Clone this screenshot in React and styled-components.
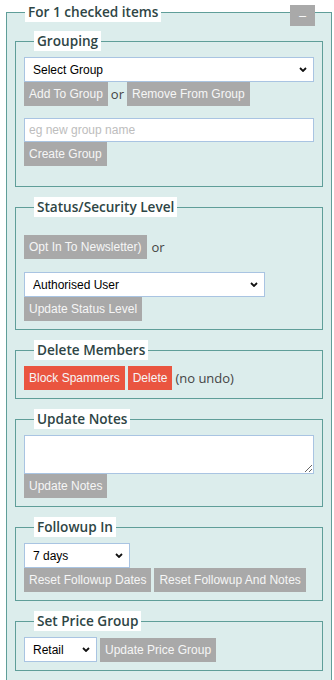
import React from 'react';
import styled, { createGlobalStyle, css } from 'styled-components';

const GlobalStyle = createGlobalStyle`
  body {
    margin: 0;
    background: #fff;
    font-family: "Liberation Sans", Arial, sans-serif;
  }
`;

const teal = '#5f9e99';
const fieldBorder = '#a9c4e2';

const Page = styled.div`
  padding: 2px 2px 0 6px;
`;

const Panel = styled.fieldset`
  position: relative;
  margin: 0;
  min-width: 0;
  padding: 9px 8px 8px;
  border: 1px solid ${teal};
  background: #dcedec;
`;

const Legend = styled.legend`
  margin-left: 10px;
  padding: 0 3px;
  background: #fff;
  font-family: "Open Sans", sans-serif;
  font-weight: 600;
  font-size: 13.6px;
  line-height: 20px;
  color: #2e4545;
`;

const CollapseButton = styled.button`
  position: absolute;
  top: -17px;
  right: 16px;
  width: 25px;
  height: 21px;
  padding: 0 0 11px;
  border: 0;
  background: #a9a9a9;
  color: #fff;
  font-family: "Liberation Sans", Arial, sans-serif;
  font-size: 12px;
  line-height: 10px;
`;

const Section = styled.fieldset`
  margin: 0 0 10px;
  min-width: 0;
  padding: 6px 8px ${(p) => (p.$loose ? '20px' : '8px')};
  border: 1px solid ${teal};
`;

const Row = styled.div`
  display: flex;
  align-items: center;
  flex-wrap: wrap;
  gap: 3px;
  margin-top: ${(p) => p.$top || 0}px;
`;

const Button = styled.button`
  height: 24px;
  padding: 0 5px;
  border: 0;
  font-family: "Liberation Sans", Arial, sans-serif;
  font-size: 12px;
  color: #f6f6f6;
  background: #a9a9a9;
  ${(p) =>
    p.$danger &&
    css`
      background: #ea5540;
    `}
`;

const Note = styled.span`
  font-family: "Open Sans", sans-serif;
  font-size: 13px;
  color: #444;
  padding: 0 ${(p) => p.$pad || 0}px;
`;

const SelectWrap = styled.div`
  position: relative;
  width: ${(p) => p.$width || '100%'};
  height: 25px;
`;

const Select = styled.select`
  appearance: none;
  width: 100%;
  height: 25px;
  padding: 0 20px 0 8px;
  border: 1px solid ${fieldBorder};
  border-radius: 0;
  background: #fff;
  font-family: "Liberation Sans", Arial, sans-serif;
  font-size: 12px;
  color: #000;
`;

const Chevron = styled.svg`
  position: absolute;
  right: 7px;
  top: 10px;
  pointer-events: none;
`;

const TextInput = styled.input`
  box-sizing: border-box;
  display: block;
  width: 100%;
  height: 24px;
  padding: 0 4px;
  border: 1px solid ${fieldBorder};
  font-family: "Liberation Sans", Arial, sans-serif;
  font-size: 12px;
  &::placeholder {
    color: #bdbdbd;
  }
`;

const TextArea = styled.textarea`
  box-sizing: border-box;
  display: block;
  width: 100%;
  height: 39px;
  margin: 0;
  border: 1px solid ${fieldBorder};
  font-family: "Liberation Sans", Arial, sans-serif;
  font-size: 12px;
`;

function Dropdown({ width, value, options }) {
  return (
    <SelectWrap $width={width}>
      <Select defaultValue={value}>
        {options.map((o) => (
          <option key={o}>{o}</option>
        ))}
      </Select>
      <Chevron width="8" height="5" viewBox="0 0 8 5">
        <path d="M1 1 L4 4 L7 1" fill="none" stroke="#111" strokeWidth="1.8" />
      </Chevron>
    </SelectWrap>
  );
}

export default function App() {
  return (
    <Page>
      <GlobalStyle />
      <Panel>
        <Legend>For 1 checked items</Legend>
        <CollapseButton>_</CollapseButton>

        <Section $loose>
          <Legend>Grouping</Legend>
          <Dropdown value="Select Group" options={['Select Group', 'Members', 'Volunteers']} />
          <Row>
            <Button>Add To Group</Button>
            <Note>or</Note>
            <Button>Remove From Group</Button>
          </Row>
          <Row $top={12}>
            <TextInput placeholder="eg new group name" />
          </Row>
          <Row>
            <Button>Create Group</Button>
          </Row>
        </Section>

        <Section>
          <Legend>Status/Security Level</Legend>
          <Row $top={12}>
            <Button>Opt In To Newsletter)</Button>
            <Note $pad={2}>or</Note>
          </Row>
          <Row $top={13}>
            <Dropdown width="241px" value="Authorised User" options={['Authorised User', 'Administrator', 'Guest']} />
          </Row>
          <Row>
            <Button>Update Status Level</Button>
          </Row>
        </Section>

        <Section>
          <Legend>Delete Members</Legend>
          <Row>
            <Button $danger>Block Spammers</Button>
            <Button $danger>Delete</Button>
            <Note>(no undo)</Note>
          </Row>
        </Section>

        <Section>
          <Legend>Update Notes</Legend>
          <TextArea />
          <Row>
            <Button>Update Notes</Button>
          </Row>
        </Section>

        <Section>
          <Legend>Followup In</Legend>
          <Dropdown width="106px" value="7 days" options={['1 day', '3 days', '7 days', '14 days', '30 days']} />
          <Row>
            <Button>Reset Followup Dates</Button>
            <Button>Reset Followup And Notes</Button>
          </Row>
        </Section>

        <Section>
          <Legend>Set Price Group</Legend>
          <Row>
            <Dropdown width="73px" value="Retail" options={['Retail', 'Trade', 'Wholesale']} />
            <Button>Update Price Group</Button>
          </Row>
        </Section>
      </Panel>
    </Page>
  );
}
